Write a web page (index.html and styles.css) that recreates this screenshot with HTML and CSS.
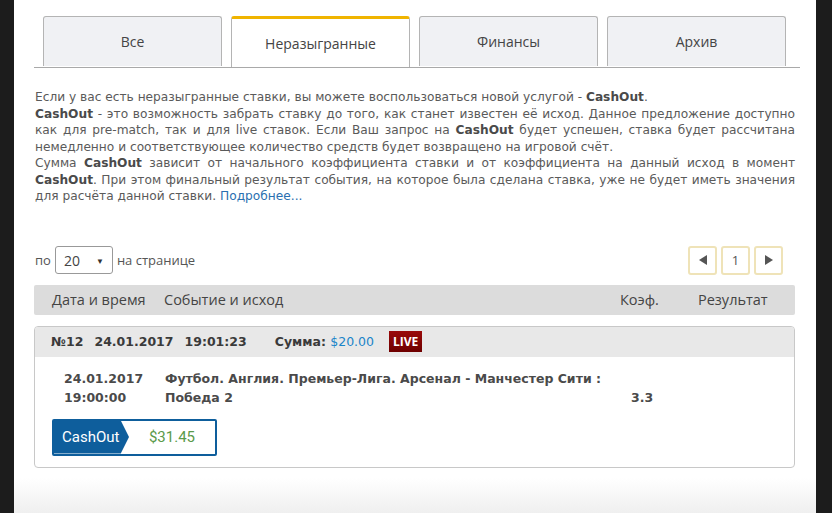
FILE: index.html
```html
<!DOCTYPE html>
<html lang="ru">
<head>
<meta charset="utf-8">
<link rel="stylesheet" href="styles.css">
</head>
<body>
<div class="page">
  <div class="tabs">
    <div class="tab">Все</div>
    <div class="tab active">Неразыгранные</div>
    <div class="tab">Финансы</div>
    <div class="tab">Архив</div>
  </div>
  <p class="info">Если у вас есть неразыгранные ставки, вы можете воспользоваться новой услугой - <b>CashOut</b>.<br><b>CashOut</b> - это возможность забрать ставку до того, как станет известен её исход. Данное предложение доступно как для pre-match, так и для live ставок. Если Ваш запрос на <b>CashOut</b> будет успешен, ставка будет рассчитана немедленно и соответствующее количество средств будет возвращено на игровой счёт.<br>Сумма <b>CashOut</b> зависит от начального коэффициента ставки и от коэффициента на данный исход в момент <b>CashOut</b>. При этом финальный результат события, на которое была сделана ставка, уже не будет иметь значения для расчёта данной ставки. <a class="more">Подробнее...</a></p>
  <div class="pager">
    <div class="perpage">по <span class="select">20 <span class="caret">▼</span></span> на странице</div>
    <div class="pages">
      <span class="pbtn"><svg width="12" height="12" viewBox="0 0 12 12"><path d="M10 1 L2 6 L10 11 Z" fill="#555"/></svg></span>
      <span class="pbtn num">1</span>
      <span class="pbtn"><svg width="12" height="12" viewBox="0 0 12 12"><path d="M2 1 L10 6 L2 11 Z" fill="#555"/></svg></span>
    </div>
  </div>
  <div class="thead">
    <span class="c-date">Дата и время</span>
    <span class="c-event">Событие и исход</span>
    <span class="c-coef">Коэф.</span>
    <span class="c-res">Результат</span>
  </div>
  <div class="card">
    <div class="card-head">
      <span>№12</span><span>24.01.2017</span><span>19:01:23</span><span class="sum">Сумма: <span class="amount">$20.00</span></span><span class="live">LIVE</span>
    </div>
    <div class="card-body">
      <div class="row">
        <div class="date">24.01.2017<br>19:00:00</div>
        <div class="event">Футбол. Англия. Премьер-Лига. Арсенал - Манчестер Сити :<br>Победа 2</div>
        <div class="coef">3.3</div>
      </div>
      <div class="cashout">
        <span class="co-label">CashOut</span>
        <span class="co-value">$31.45</span>
      </div>
    </div>
  </div>
</div>
</body>
</html>
```
FILE: styles.css
```css
html, body { margin: 0; padding: 0; }
body { background: #1c1c1c; width: 832px; height: 513px; overflow: hidden; }
.page {
  margin-left: 14px;
  width: 802px;
  height: 513px;
  background: linear-gradient(#fff 0, #fff 478px, #efefef 513px);
  padding: 16px 21px 0 20px;
  box-sizing: border-box;
  font-family: "Open Sans", sans-serif;
  color: #444;
}
.tabs {
  display: flex;
  gap: 9px;
  padding-left: 9px;
  border-bottom: 1px solid #a9a9a9;
  margin-right: -5px;
  height: 51px;
}
.tab {
  flex: 0 0 179px;
  height: 50px;
  box-sizing: border-box;
  border: 1px solid #b4b4b4;
  border-bottom: none;
  border-radius: 3px 3px 0 0;
  background: #f0f1f4;
  display: flex;
  align-items: center;
  justify-content: center;
  font-size: 14px;
  color: #444;
}
.tab.active {
  background: #fff;
  border-top: 3px solid #f0b400;
  height: 51px;
  margin-bottom: -1px;
  padding-top: 1px;
}
.info {
  margin: 21px 0 0 1px;
  font-family: "DejaVu Sans", sans-serif;
  font-size: 12.2px;
  line-height: 16.5px;
  color: #5a5a5a;
  text-align: justify;
}
.info b { font-weight: bold; color: #4a4a4a; }
.more { color: #2a6fb0; }
.pager {
  display: flex;
  justify-content: space-between;
  align-items: center;
  margin-top: 41px;
  padding-right: 12px;
}
.perpage {
  font-size: 13px;
  color: #555;
  display: flex;
  align-items: center;
  gap: 4px;
  padding-left: 1px;
}
.select {
  width: 58px;
  height: 28px;
  box-sizing: border-box;
  border: 1px solid #999;
  border-radius: 3px;
  display: inline-flex;
  align-items: center;
  justify-content: space-between;
  padding: 0 8px 0 8px;
  font-size: 14px;
  color: #444;
}
.caret { font-size: 8px; color: #333; }
.pages { display: flex; gap: 4px; }
.pbtn {
  width: 29px;
  height: 29px;
  box-sizing: border-box;
  border: 2px solid #efe3b8;
  border-radius: 3px;
  display: flex;
  align-items: center;
  justify-content: center;
  font-size: 13px;
  color: #555;
}
.thead {
  margin-top: 10px;
  height: 30px;
  background: #dcdcdc;
  display: flex;
  align-items: center;
  font-size: 14.5px;
  color: #444;
  border-radius: 2px;
}
.c-date { margin-left: 18px; width: 112px; }
.c-event { flex: 1; }
.c-coef { width: 78px; }
.c-res { width: 97px; }
.card {
  margin-top: 11px;
  border: 1px solid #c8c8c8;
  border-radius: 4px;
  height: 142px;
  box-sizing: border-box;
  overflow: hidden;
  font-family: "DejaVu Sans", sans-serif;
}
.card-head {
  background: #e8e8e8;
  height: 30px;
  display: flex;
  align-items: center;
  padding-left: 16px;
  font-weight: bold;
  font-size: 12.5px;
  color: #3a3a3a;
  gap: 11px;
}
.card-head .sum { margin-left: 17px; }
.amount { color: #1a84c8; font-weight: normal; }
.live {
  margin-left: 4px;
  background: linear-gradient(#9a0a0a, #6e0000);
  color: #fff;
  font-family: "Open Sans", sans-serif;
  font-size: 12px;
  padding: 2px 4px;
}
.card-body { padding: 12px 0 0 17px; }
.row { display: flex; font-size: 12.5px; color: #4a4a4a; line-height: 19px; font-weight: bold; }
.date { width: 113px; padding-left: 12px; box-sizing: border-box; }
.event { width: 466px; }
.coef { padding-top: 19px; }
.cashout {
  margin-top: 12px;
  width: 165px;
  height: 37px;
  box-sizing: border-box;
  border: 2px solid #0e5e9c;
  border-radius: 2px;
  display: flex;
  font-family: "Roboto", sans-serif;
}
.co-label {
  background: #0e5e9c;
  color: #fff;
  width: 75px;
  display: flex;
  align-items: center;
  padding-left: 8px;
  box-sizing: border-box;
  font-size: 15px;
  clip-path: polygon(0 0, 89% 0, 100% 50%, 89% 100%, 0 100%);
}
.co-value {
  flex: 1;
  display: flex;
  align-items: center;
  justify-content: center;
  font-size: 15px;
  color: #5a9a4a;
}
```
